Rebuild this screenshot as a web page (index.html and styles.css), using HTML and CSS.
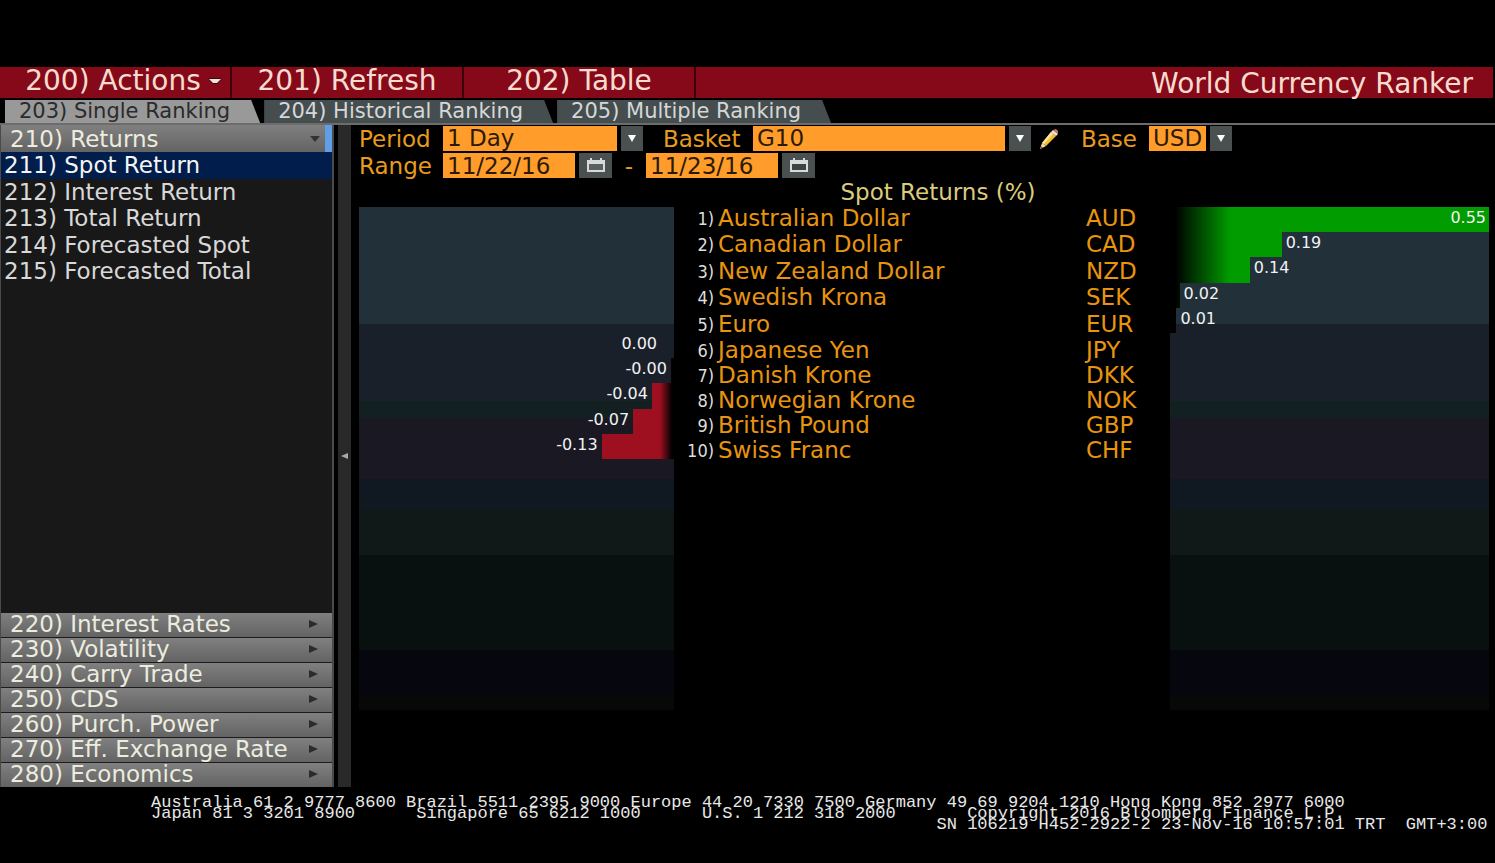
FILE: index.html
```html
<!DOCTYPE html>
<html lang="en">
<head>
<meta charset="utf-8">
<title>World Currency Ranker</title>
<link rel="stylesheet" href="styles.css">
</head>
<body>
<header class="toolbar">
  <button class="tool tool-menu" type="button">200) Actions
    <svg width="12" height="6" viewBox="0 0 12 6" aria-hidden="true"><path d="M0 0h12v2l-4 4H4L0 2z" fill="#3c0810"/><path d="M0 1h12L8 5H4z" fill="#f0e4d8"/></svg>
  </button>
  <button class="tool" type="button">201) Refresh</button>
  <button class="tool" type="button">202) Table</button>
  <h1 class="app-title">World Currency Ranker</h1>
</header>
<nav class="tabs">
  <a class="tab tab-active" href="#single">203) Single Ranking</a>
  <a class="tab" href="#historical">204) Historical Ranking</a>
  <a class="tab" href="#multiple">205) Multiple Ranking</a>
</nav>
<div class="workspace">
  <aside class="sidebar">
    <button class="group group-open" type="button">210) Returns <svg width="10" height="6" viewBox="0 0 10 6" aria-hidden="true"><path d="M0 0h10L5 6z" fill="#333"/></svg></button>
    <nav class="items">
      <a class="item item-active" href="#spot">211) Spot Return</a>
      <a class="item" href="#interest">212) Interest Return</a>
      <a class="item" href="#total">213) Total Return</a>
      <a class="item" href="#fspot">214) Forecasted Spot</a>
      <a class="item" href="#ftotal">215) Forecasted Total</a>
    </nav>
    <div class="groups">
      <button class="group" type="button">220) Interest Rates <svg width="9" height="8" viewBox="0 0 9 8" aria-hidden="true"><path d="M0 0l9 4-9 4z" fill="#2b2b2b"/></svg></button>
      <button class="group" type="button">230) Volatility <svg width="9" height="8" viewBox="0 0 9 8" aria-hidden="true"><path d="M0 0l9 4-9 4z" fill="#2b2b2b"/></svg></button>
      <button class="group" type="button">240) Carry Trade <svg width="9" height="8" viewBox="0 0 9 8" aria-hidden="true"><path d="M0 0l9 4-9 4z" fill="#2b2b2b"/></svg></button>
      <button class="group" type="button">250) CDS <svg width="9" height="8" viewBox="0 0 9 8" aria-hidden="true"><path d="M0 0l9 4-9 4z" fill="#2b2b2b"/></svg></button>
      <button class="group" type="button">260) Purch. Power <svg width="9" height="8" viewBox="0 0 9 8" aria-hidden="true"><path d="M0 0l9 4-9 4z" fill="#2b2b2b"/></svg></button>
      <button class="group" type="button">270) Eff. Exchange Rate <svg width="9" height="8" viewBox="0 0 9 8" aria-hidden="true"><path d="M0 0l9 4-9 4z" fill="#2b2b2b"/></svg></button>
      <button class="group" type="button">280) Economics <svg width="9" height="8" viewBox="0 0 9 8" aria-hidden="true"><path d="M0 0l9 4-9 4z" fill="#2b2b2b"/></svg></button>
    </div>
  </aside>
  <button class="divider" type="button" aria-label="Collapse sidebar"><svg width="7" height="6" viewBox="0 0 7 6" aria-hidden="true"><path d="M7 0v6L0 3z" fill="#aaa"/></svg></button>
  <main class="main">
    <form class="filters">
      <div class="filter-row">
        <label class="label" for="period">Period</label>
        <span class="combo combo-period"><select id="period"><option>1 Day</option></select><svg width="8" height="7" viewBox="0 0 8 7" aria-hidden="true"><path d="M0 0h8L4 7z" fill="#fff"/></svg></span>
        <label class="label label-basket" for="basket">Basket</label>
        <span class="combo combo-basket"><select id="basket"><option>G10</option></select><svg width="8" height="7" viewBox="0 0 8 7" aria-hidden="true"><path d="M0 0h8L4 7z" fill="#fff"/></svg></span>
        <button class="edit" type="button" aria-label="Edit basket"><svg width="20" height="20" viewBox="0 0 20 20" aria-hidden="true"><path d="M1 20l2-6 4 3z" fill="#f6dcae"/><path d="M1 20l1-3 2 2z" fill="#7a5a30"/><path d="M3 14L12 3l5 4-10 10z" fill="#f5bd35"/><path d="M3 14L12 3l2 2-9 10z" fill="#ffe79a"/><path d="M12 3l2-2 5 4-2 2z" fill="#f0e4de"/><path d="M14 1l3-1 2 2v3z" fill="#c9776b"/></svg></button>
        <label class="label label-base" for="base">Base</label>
        <span class="combo combo-base"><select id="base"><option>USD</option></select><svg width="8" height="7" viewBox="0 0 8 7" aria-hidden="true"><path d="M0 0h8L4 7z" fill="#fff"/></svg></span>
      </div>
      <div class="filter-row">
        <label class="label" for="from">Range</label>
        <input class="date" id="from" type="text" value="11/22/16">
        <button class="calendar" type="button" aria-label="Pick start date"><svg width="18" height="15" viewBox="0 0 18 15" aria-hidden="true"><path d="M0 2h18v12H0z" fill="#d8dada"/><path d="M2 6h14v6H2z" fill="#5a6060"/><path d="M3 0h2v3H3zM13 0h2v3h-2z" fill="#d8dada"/></svg></button>
        <label class="dash" for="to">-</label>
        <input class="date" id="to" type="text" value="11/23/16">
        <button class="calendar" type="button" aria-label="Pick end date"><svg width="18" height="15" viewBox="0 0 18 15" aria-hidden="true"><path d="M0 2h18v12H0z" fill="#d8dada"/><path d="M2 6h14v6H2z" fill="#3c4242"/><path d="M3 0h2v3H3zM13 0h2v3h-2z" fill="#d8dada"/></svg></button>
      </div>
    </form>
    <h2 class="chart-title">Spot Returns (%)</h2>
    <section class="chart">
      <div class="panel panel-loss">
        <div class="bar-row row-zero"><span class="value">0.00</span></div>
        <div class="bar-row"><span class="value">-0.00</span><i class="bar" style="width:1%"></i></div>
        <div class="bar-row"><span class="value">-0.04</span><i class="bar" style="width:7%"></i></div>
        <div class="bar-row"><span class="value">-0.07</span><i class="bar" style="width:13%"></i></div>
        <div class="bar-row"><span class="value">-0.13</span><i class="bar" style="width:23%"></i></div>
      </div>
      <table class="ranks">
        <tbody>
        <tr><td class="rank">1)</td><td class="name">Australian Dollar</td><td class="code">AUD</td></tr>
        <tr><td class="rank">2)</td><td class="name">Canadian Dollar</td><td class="code">CAD</td></tr>
        <tr><td class="rank">3)</td><td class="name">New Zealand Dollar</td><td class="code">NZD</td></tr>
        <tr><td class="rank">4)</td><td class="name">Swedish Krona</td><td class="code">SEK</td></tr>
        <tr><td class="rank">5)</td><td class="name">Euro</td><td class="code">EUR</td></tr>
        <tr><td class="rank">6)</td><td class="name">Japanese Yen</td><td class="code">JPY</td></tr>
        <tr><td class="rank">7)</td><td class="name">Danish Krone</td><td class="code">DKK</td></tr>
        <tr><td class="rank">8)</td><td class="name">Norwegian Krone</td><td class="code">NOK</td></tr>
        <tr><td class="rank">9)</td><td class="name">British Pound</td><td class="code">GBP</td></tr>
        <tr><td class="rank">10)</td><td class="name">Swiss Franc</td><td class="code">CHF</td></tr>
        </tbody>
      </table>
      <div class="panel panel-gain">
        <div class="bar-row"><i class="bar bar-full" style="width:100%"><span class="value">0.55</span></i></div>
        <div class="bar-row"><i class="bar" style="width:35%"></i><span class="value">0.19</span></div>
        <div class="bar-row"><i class="bar" style="width:25%"></i><span class="value">0.14</span></div>
        <div class="bar-row"><i class="bar" style="width:3%"></i><span class="value">0.02</span></div>
        <div class="bar-row"><i class="bar" style="width:2%"></i><span class="value">0.01</span></div>
      </div>
    </section>
  </main>
</div>
<footer class="footer">
<pre class="contacts">Australia 61 2 9777 8600 Brazil 5511 2395 9000 Europe 44 20 7330 7500 Germany 49 69 9204 1210 Hong Kong 852 2977 6000
Japan 81 3 3201 8900      Singapore 65 6212 1000      U.S. 1 212 318 2000       Copyright 2016 Bloomberg Finance L.P.
                                                                             SN 106219 H452-2922-2 23-Nov-16 10:57:01 TRT  GMT+3:00</pre>
</footer>
</body>
</html>
```
FILE: styles.css
```css
* { box-sizing: border-box; }

body {
  margin: 0;
  min-height: 100vh;
  padding-top: 67px;
  display: flex;
  flex-direction: column;
  background: #000;
  color: #eee;
  font-family: "DejaVu Sans", sans-serif;
  font-size: 23px;
  line-height: 26px;
}

button, input, select {
  margin: 0;
  border: 0;
  border-radius: 0;
  padding: 0;
  font: inherit;
  color: inherit;
}

a { color: inherit; text-decoration: none; }
h1, h2, pre { margin: 0; font-weight: normal; }
svg { display: block; flex: none; }

/* Top toolbar */
.toolbar {
  display: flex;
  gap: 2px;
  margin-right: 2px;
  height: 31px;
  background: #3a040c;
  font-size: 28px;
  line-height: 28px;
}
.tool {
  width: 230px;
  display: flex;
  align-items: center;
  justify-content: center;
  gap: 8px;
  padding-bottom: 3px;
  background: #86091a;
  color: #f6dccf;
}
.tool-menu { padding-left: 16px; }
.app-title {
  flex: 1;
  padding: 3px 20px 0 0;
  background: #86091a;
  color: #f6dccf;
  font-size: 28px;
  text-align: right;
}

/* Ranking tabs */
.tabs {
  display: flex;
  gap: 4px;
  padding: 2px 0 0 5px;
  border-bottom: 2px solid #6c6c6c;
  font-size: 21px;
  line-height: 23px;
}
.tab {
  padding: 0 30px 0 14px;
  background: #454d4e;
  color: #d4d8d8;
  clip-path: polygon(0 0, calc(100% - 9px) 0, 100% 100%, 0 100%);
}
.tab-active { background: #999; color: #2b2b2b; }

.workspace { flex: 1; display: flex; }

/* Sidebar */
.sidebar {
  width: 334px;
  display: flex;
  flex-direction: column;
  border: solid #4a4a4a;
  border-width: 0 2px 0 1px;
  background: #181818;
}
.group {
  width: 100%;
  height: 24px;
  display: flex;
  align-items: center;
  justify-content: space-between;
  padding: 0 14px 2px 9px;
  background: linear-gradient(#808080, #636363);
  color: #ececdf;
  line-height: 22px;
  text-align: left;
  white-space: nowrap;
}
.group-open {
  height: 27px;
  border-right: 7px solid #5f9fe6;
  padding: 0 5px 0 9px;
}
.items {
  height: 133px;
  display: grid;
  grid-template-rows: repeat(5, 1fr);
}
.item { padding-left: 3px; color: #d8d8d8; }
.item-active { background: #001d4b; color: #f4f4f4; }
.groups {
  margin-top: auto;
  display: grid;
  gap: 1px;
  background: #1c1c1c;
}
.divider {
  width: 13px;
  margin-left: 4px;
  display: flex;
  align-items: center;
  justify-content: center;
  background: #292929;
}

/* Filters */
.main { flex: 1; padding: 1px 6px 0 8px; }
.filters { display: grid; gap: 2px; }
.filter-row { display: flex; height: 25px; }
.label { width: 84px; color: #e89b1d; }
.label-basket { width: 90px; margin-left: 20px; }
.label-base { width: 68px; margin-left: 22px; }
.combo { position: relative; display: flex; }
.combo select {
  appearance: none;
  width: 100%;
  padding: 0 26px 0 4px;
  background: linear-gradient(to right, #ff9c2a calc(100% - 26px), #000 calc(100% - 26px), #000 calc(100% - 22px), #4a5050 calc(100% - 22px));
  color: #2b1a06;
  line-height: 25px;
}
.combo svg { position: absolute; right: 7px; top: 9px; pointer-events: none; }
.combo-period { width: 200px; }
.combo-basket { width: 278px; }
.combo-base { width: 83px; }
.edit {
  width: 20px;
  margin-left: 8px;
  background: none;
}
.date {
  width: 132px;
  padding-left: 4px;
  background: #ff9c2a;
  color: #2b1a06;
}
.calendar {
  width: 33px;
  margin-left: 4px;
  display: flex;
  align-items: center;
  justify-content: center;
  background: #4a5050;
}
.dash { width: 34px; color: #e89b1d; text-align: center; }

.chart-title {
  padding: 1px 0 0 28px;
  color: #dccb7c;
  font-size: 23px;
  text-align: center;
}

/* Chart */
.chart {
  display: grid;
  grid-template-columns: 315fr 496fr 319fr;
  align-items: start;
  padding-top: 2px;
}
.panel {
  height: 503px;
  padding-bottom: 251px;
  display: grid;
  grid-template-rows: repeat(10, 1fr);
  background: linear-gradient(
    #213039 117px, #1a202a 117px 194px, #132021 194px 211px,
    #1a1822 211px 272px, #101822 272px 303px, #111918 303px 348px,
    #08110f 348px 443px, #06060f 443px 489px, #080808 489px);
  font-size: 16px;
  line-height: 22px;
}
.bar-row { display: flex; gap: 4px; min-height: 0; }
.value { font-style: normal; color: #f2f2f2; }
.bar { height: 100%; }
.panel-loss { grid-template-rows: repeat(5, 1fr); padding-top: 126px; }
.panel-loss .bar-row { justify-content: flex-end; }
.panel-loss .row-zero { padding-right: 17px; }
.panel-loss .bar { background: linear-gradient(to left, #000 2px, #9e0f20 14px); }
.panel-gain .bar { background: linear-gradient(to right, #000 5px, #009c00 60px); }
.bar-full { padding-right: 3px; text-align: right; }

.ranks { width: 100%; border-collapse: collapse; table-layout: fixed; }
.ranks td { padding: 0; height: 26px; line-height: 23px; vertical-align: top; color: #e8940f; }
.ranks tr:nth-child(even) td { height: 27px; }
.ranks tr:nth-child(n+6) td { height: 25px; }
.ranks .rank {
  width: 40px;
  color: #ddd;
  font-family: "DejaVu Sans Condensed", "DejaVu Sans", sans-serif;
  font-size: 18px;
  font-stretch: condensed;
  text-align: right;
}
.ranks .name { padding-left: 4px; }
.ranks .code { width: 84px; }

/* Contact lines */
.footer { height: 76px; padding: 10px 0 0 151px; }
.contacts {
  color: #e8e8e8;
  font-family: "Liberation Mono", monospace;
  font-size: 17px;
  line-height: 11px;
}
```
